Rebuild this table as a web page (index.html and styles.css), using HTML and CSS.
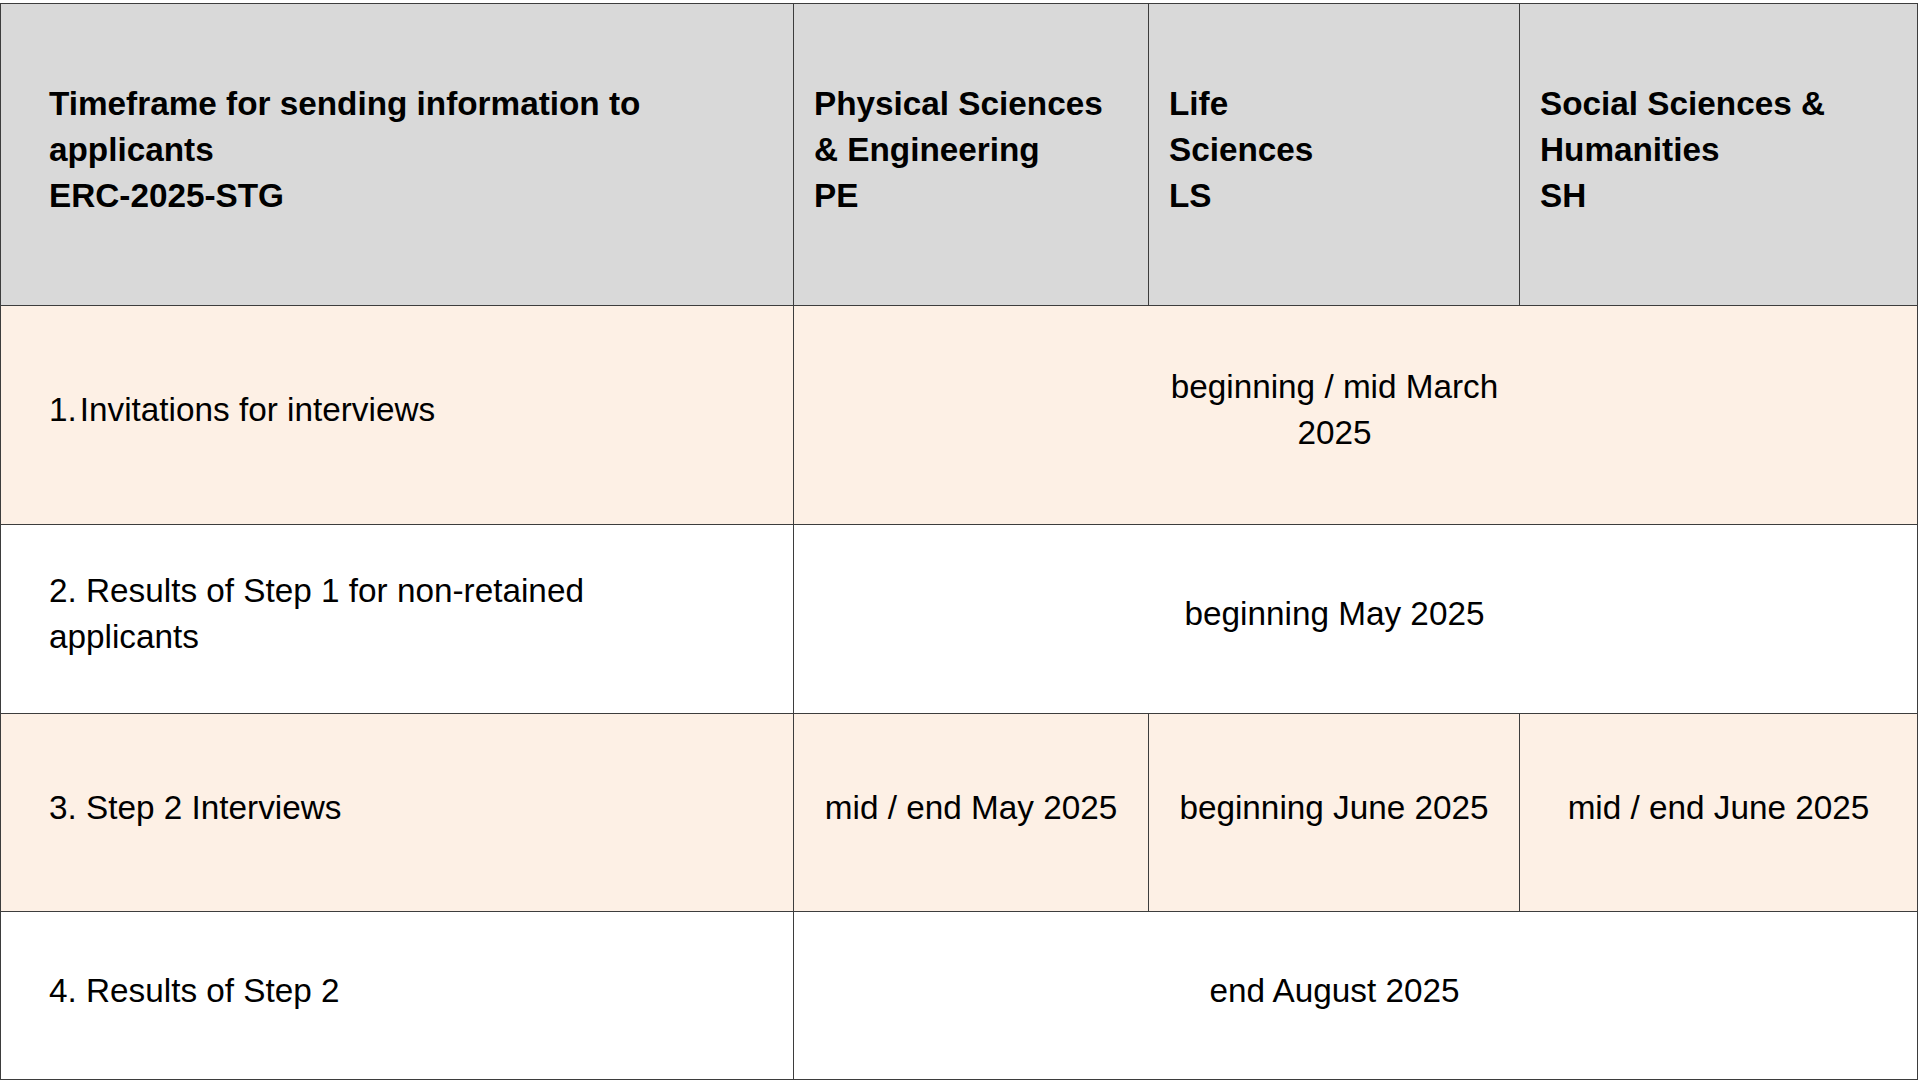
FILE: index.html
```html
<!DOCTYPE html>
<html lang="en">
<head>
<meta charset="utf-8">
<title>ERC-2025-STG timeframe</title>
<link rel="stylesheet" href="styles.css">
</head>
<body>
<table class="timeline">
  <colgroup>
    <col class="col-step">
    <col class="col-pe">
    <col class="col-ls">
    <col class="col-sh">
  </colgroup>
  <thead>
    <tr class="row-head">
      <th class="first">Timeframe for sending information to applicants<br>ERC-2025-STG</th>
      <th>Physical Sciences<br>&amp; Engineering<br>PE</th>
      <th>Life<br>Sciences<br>LS</th>
      <th>Social Sciences &amp;<br>Humanities<br>SH</th>
    </tr>
  </thead>
  <tbody>
    <tr class="row-1 tinted">
      <td class="first"><span class="num">1.</span>Invitations for interviews</td>
      <td colspan="3" class="span"><div class="span-text">beginning / mid March 2025</div></td>
    </tr>
    <tr class="row-2">
      <td class="first">2. Results of Step 1 for non-retained applicants</td>
      <td colspan="3" class="span"><div class="span-text">beginning May 2025</div></td>
    </tr>
    <tr class="row-3 tinted">
      <td class="first">3. Step 2 Interviews</td>
      <td class="center">mid / end May 2025</td>
      <td class="center">beginning June 2025</td>
      <td class="center">mid / end June 2025</td>
    </tr>
    <tr class="row-4">
      <td class="first">4. Results of Step 2</td>
      <td colspan="3" class="span"><div class="span-text">end August 2025</div></td>
    </tr>
  </tbody>
</table>
</body>
</html>
```

FILE: styles.css
```css
html, body {
  margin: 0;
  padding: 0;
  background: #ffffff;
}

body {
  padding-top: 3px;
  font-family: "Liberation Sans", Arial, sans-serif;
  font-size: 33.3px;
  line-height: 46px;
  color: #000000;
}

.timeline {
  border-collapse: collapse;
  table-layout: fixed;
  width: 1917px;
}

.col-step { width: 793px; }
.col-pe { width: 355px; }
.col-ls { width: 371px; }
.col-sh { width: 398px; }

.timeline th,
.timeline td {
  border: 1px solid #3d3d3d;
  vertical-align: middle;
  padding: 0 20px 10px 20px;
  text-align: left;
}

.timeline th {
  font-weight: bold;
  background: #d9d9d9;
}

.timeline .first {
  padding-left: 48px;
  padding-right: 110px;
}

.row-head { height: 302px; }
.row-1 { height: 219px; }
.row-2 { height: 189px; }
.row-3 { height: 198px; }
.row-4 { height: 168px; }

.tinted td {
  background: #fdf0e5;
}

.num {
  margin-right: 3px;
}

.timeline .span {
  padding-left: 0;
  padding-right: 0;
}

.span-text {
  margin-left: 355px;
  width: 371px;
  box-sizing: border-box;
  padding: 0 17px;
  text-align: center;
}

.timeline .center {
  text-align: center;
  padding-left: 2px;
  padding-right: 2px;
}
```
